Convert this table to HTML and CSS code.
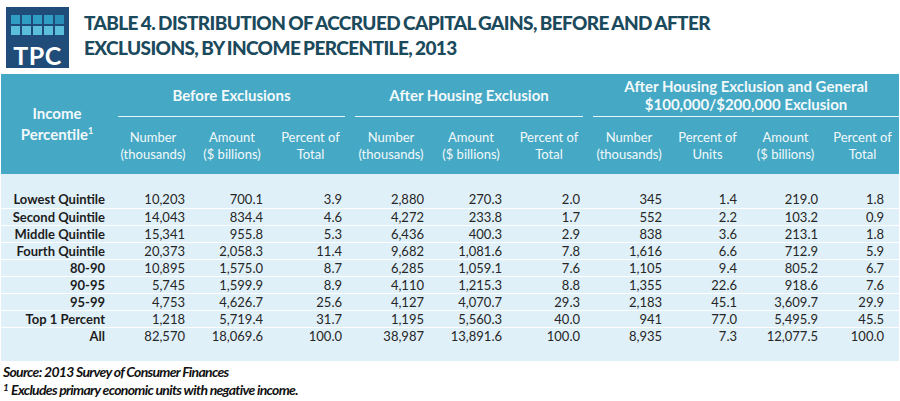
FILE: index.html
```html
<!DOCTYPE html>
<html>
<head>
<meta charset="utf-8">
<link rel="stylesheet" href="styles.css">
</head>
<body>
<div class="page">
  <header class="head">
    <div class="logo">
      <div class="grid">
        <span class="sq a"></span><span class="sq a"></span><span class="sq a"></span><span class="sq a"></span><span class="sq d"></span>
        <span class="sq b"></span><span class="sq b"></span><span class="sq b"></span><span class="sq b"></span><span class="sq b"></span>
      </div>
      <div class="tpc">TPC</div>
    </div>
    <h1 class="title">TABLE 4. DISTRIBUTION OF ACCRUED CAPITAL GAINS, BEFORE AND AFTER<br>EXCLUSIONS, BY INCOME PERCENTILE, 2013</h1>
  </header>
  <table class="tbl">
    <colgroup>
      <col class="c0"><col class="c1"><col class="c2"><col class="c3"><col class="c4"><col class="c5"><col class="c6"><col class="c7"><col class="c8"><col class="c9"><col class="c10">
    </colgroup>
    <thead>
      <tr class="grp">
        <th rowspan="2" class="lbl">Income<br>Percentile<sup>1</sup></th>
        <th colspan="3"><div class="gt">Before Exclusions</div></th>
        <th colspan="3"><div class="gt">After Housing Exclusion</div></th>
        <th colspan="4" class="last"><div class="gt two">After Housing Exclusion and General<br>$100,000/$200,000 Exclusion</div></th>
      </tr>
      <tr class="sub">
        <th>Number<br>(thousands)</th>
        <th>Amount<br>($ billions)</th>
        <th>Percent of<br>Total</th>
        <th>Number<br>(thousands)</th>
        <th>Amount<br>($ billions)</th>
        <th>Percent of<br>Total</th>
        <th>Number<br>(thousands)</th>
        <th>Percent of<br>Units</th>
        <th>Amount<br>($ billions)</th>
        <th>Percent of<br>Total</th>
      </tr>
    </thead>
    <tbody>
      <tr class="spacer"><td colspan="11"></td></tr>
      <tr><th>Lowest Quintile</th><td>10,203</td><td>700.1</td><td>3.9</td><td>2,880</td><td>270.3</td><td>2.0</td><td>345</td><td>1.4</td><td>219.0</td><td>1.8</td></tr>
      <tr class="ln"><th>Second Quintile</th><td>14,043</td><td>834.4</td><td>4.6</td><td>4,272</td><td>233.8</td><td>1.7</td><td>552</td><td>2.2</td><td>103.2</td><td>0.9</td></tr>
      <tr class="ln"><th>Middle Quintile</th><td>15,341</td><td>955.8</td><td>5.3</td><td>6,436</td><td>400.3</td><td>2.9</td><td>838</td><td>3.6</td><td>213.1</td><td>1.8</td></tr>
      <tr class="ln"><th>Fourth Quintile</th><td>20,373</td><td>2,058.3</td><td>11.4</td><td>9,682</td><td>1,081.6</td><td>7.8</td><td>1,616</td><td>6.6</td><td>712.9</td><td>5.9</td></tr>
      <tr class="ln"><th>80-90</th><td>10,895</td><td>1,575.0</td><td>8.7</td><td>6,285</td><td>1,059.1</td><td>7.6</td><td>1,105</td><td>9.4</td><td>805.2</td><td>6.7</td></tr>
      <tr class="ln"><th>90-95</th><td>5,745</td><td>1,599.9</td><td>8.9</td><td>4,110</td><td>1,215.3</td><td>8.8</td><td>1,355</td><td>22.6</td><td>918.6</td><td>7.6</td></tr>
      <tr class="ln"><th>95-99</th><td>4,753</td><td>4,626.7</td><td>25.6</td><td>4,127</td><td>4,070.7</td><td>29.3</td><td>2,183</td><td>45.1</td><td>3,609.7</td><td>29.9</td></tr>
      <tr class="ln"><th>Top 1 Percent</th><td>1,218</td><td>5,719.4</td><td>31.7</td><td>1,195</td><td>5,560.3</td><td>40.0</td><td>941</td><td>77.0</td><td>5,495.9</td><td>45.5</td></tr>
      <tr class="ln"><th>All</th><td>82,570</td><td>18,069.6</td><td>100.0</td><td>38,987</td><td>13,891.6</td><td>100.0</td><td>8,935</td><td>7.3</td><td>12,077.5</td><td>100.0</td></tr>
      <tr class="spacer end"><td colspan="11"></td></tr>
    </tbody>
  </table>
  <div class="notes">
    <p class="src">Source: 2013 Survey of Consumer Finances</p>
    <p class="fn"><sup>1</sup>Excludes primary economic units with negative income.</p>
  </div>
</div>
</body>
</html>
```

FILE: styles.css
```css
* { box-sizing: border-box; }
html, body { margin: 0; padding: 0; background: #ffffff; }
.page { width: 900px; font-family: Lato, "Open Sans", sans-serif; }

.head {
  display: flex;
  align-items: center;
  height: 74px;
  padding-left: 6px;
}
.logo {
  width: 63px;
  height: 61px;
  background: #1f4c78;
  display: flex;
  flex-direction: column;
  align-items: center;
  padding-top: 8px;
}
.grid {
  display: grid;
  grid-template-columns: repeat(5, 9.4px);
  grid-auto-rows: 9.5px;
  gap: 1.5px;
}
.sq.a { background: #2f9dc4; }
.sq.d { background: #2a8fb8; }
.sq.b { background: #5bbedb; }
.tpc {
  color: #ffffff;
  font-weight: 700;
  font-size: 25px;
  line-height: 25px;
  margin-top: 8px;
  letter-spacing: 0.5px;
}
.title {
  margin: 0 0 0 15px;
  font-size: 19px;
  line-height: 25px;
  font-weight: 900;
  color: #1b4a5c;
  letter-spacing: -0.6px;
  word-spacing: -1px;
  padding-bottom: 4px;
}

.tbl {
  margin-left: 1px;
  width: 898px;
  border-collapse: collapse;
  table-layout: fixed;
}
.c0 { width: 112px; }
.c1 { width: 80px; }
.c2 { width: 78px; }
.c3 { width: 79px; }
.c4 { width: 82px; }
.c5 { width: 78px; }
.c6 { width: 78px; }
.c7 { width: 82px; }
.c8 { width: 75px; }
.c9 { width: 81px; }
.c10 { width: 73px; }

thead th {
  background: #45a8c4;
  color: #f2f9fb;
  padding: 0;
  font-weight: 700;
}
.grp th { height: 43px; vertical-align: bottom; padding: 0 5px; }
.grp th.last { padding-right: 0; }
.gt {
  font-size: 15px;
  line-height: 18px;
  border-bottom: 1.5px solid #e8f5f9;
  padding-bottom: 12px;
}
.gt.two { padding-bottom: 3px; }
.grp th.lbl {
  vertical-align: middle;
  font-size: 15px;
  line-height: 21px;
  padding: 0;
}
.lbl sup { font-size: 9px; vertical-align: 6px; line-height: 0; }
.sub th {
  height: 57px;
  font-size: 13px;
  line-height: 17px;
  font-weight: 400;
  vertical-align: middle;
  padding: 0;
}

tbody { background: #e0f0f8; }
tbody tr { height: 17px; }
tbody tr.ln { border-top: 1px solid #ffffff; }
tbody tr.spacer td { height: 17px; padding: 0; }
tbody tr.spacer.end td { height: 14px; }
tbody th {
  text-align: right;
  font-weight: 700;
  font-size: 13px;
  line-height: 16px;
  color: #1d1d1d;
  padding: 0 8px 0 0;
}
tbody td {
  text-align: right;
  font-size: 13px;
  line-height: 16px;
  color: #262626;
  padding: 0 8px 0 0;
}
tbody tr td:last-child { padding-right: 15px; }
tbody tr.spacer td:last-child { padding-right: 0; }

.notes { padding-left: 3px; padding-top: 2px; }
.notes p {
  margin: 0;
  font-style: italic;
  font-weight: 700;
  font-size: 14px;
  line-height: 18px;
  color: #111111;
  letter-spacing: -0.7px;
}
.fn sup { font-size: 10px; vertical-align: 4px; line-height: 0; margin-right: 3px; }
```
